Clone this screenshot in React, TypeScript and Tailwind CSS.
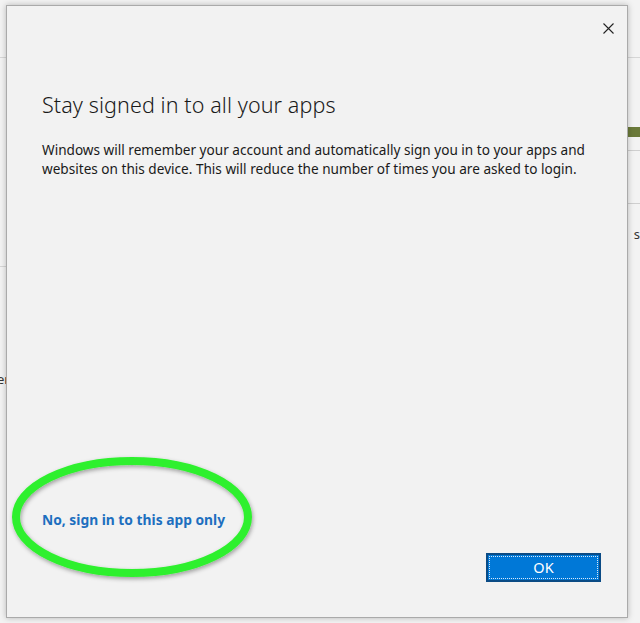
import React from "react";

const font = { fontFamily: '"Segoe UI", "Noto Sans", "Open Sans", sans-serif' };

const App: React.FC = () => {
  return (
    <div className="relative w-[640px] h-[623px] overflow-hidden bg-[#f3f3f3]" style={font}>
      {/* bits of the window behind the dialog */}
      <div className="absolute left-0 top-[57px] w-[7px] h-px bg-[#d6d6d6]" />
      <div className="absolute left-0 top-[266px] w-[7px] h-px bg-[#d6d6d6]" />
      <div className="absolute left-0 top-[373px] text-[13px] text-[#333] leading-none -ml-[3px]">er</div>
      <div className="absolute right-0 top-[57px] w-[12px] h-px bg-[#d6d6d6]" />
      <div className="absolute right-0 top-[127px] w-[12px] h-[10px] bg-[#6b7a3a]" />
      <div className="absolute right-0 top-[150px] w-[12px] h-px bg-[#cfcfcf]" />
      <div className="absolute right-0 top-[203px] w-[12px] h-px bg-[#cfcfcf]" />
      <div className="absolute right-0 top-[228px] text-[13px] text-[#333] leading-none">s</div>

      <div className="pt-[5px] pl-[6px]">
        <div className="relative w-[622px] h-[613px] bg-[#f2f2f2] border border-[#aaaaaa] shadow-[0_0_6px_rgba(0,0,0,0.25)] flex flex-col">
          <div className="flex justify-end pt-[10px] pr-[7px]">
            <button className="w-[24px] h-[24px] flex items-center justify-center">
              <svg width="11" height="11" viewBox="0 0 11 11">
                <path d="M0.5 0.5 L10.5 10.5 M10.5 0.5 L0.5 10.5" stroke="#222" strokeWidth="1.1" fill="none" />
              </svg>
            </button>
          </div>
          <div className="pl-[35px] pr-[20px] pt-[51px]">
            <h1 className="text-[21.5px] font-light text-[#1a1a1a] leading-[28px] tracking-[0.1px]">
              Stay signed in to all your apps
            </h1>
            <p className="mt-[21px] text-[13.6px] leading-[19px] text-[#1a1a1a]">
              Windows will remember your account and automatically sign you in to your apps and websites on this device. This will reduce the number of times you are asked to login.
            </p>
          </div>
          <div className="flex-1" />
          <div className="pl-[35px] pb-[22px]">
            <a className="text-[13.8px] font-bold text-[#1d6fbf] cursor-pointer">No, sign in to this app only</a>
          </div>
          <div className="flex justify-end pr-[26px] pb-[35px]">
            <button className="w-[115px] h-[29px] bg-[#0078d7] border-2 border-[#0b4b85] p-[1px]">
              <div className="w-full h-full border border-dotted border-[#d8e8f8] flex items-center justify-center text-white text-[14.5px]">
                OK
              </div>
            </button>
          </div>
        </div>
      </div>

      {/* green annotation ellipse */}
      <svg className="absolute left-0 top-0 pointer-events-none" width="640" height="623">
        <defs>
          <filter id="sh" x="-20%" y="-20%" width="140%" height="140%">
            <feDropShadow dx="1" dy="2" stdDeviation="2" floodColor="#000" floodOpacity="0.35" />
          </filter>
        </defs>
        <ellipse cx="132" cy="517" rx="116" ry="56" fill="none" stroke="#2ff02f" strokeWidth="8" filter="url(#sh)" />
      </svg>
    </div>
  );
};

export default App;
